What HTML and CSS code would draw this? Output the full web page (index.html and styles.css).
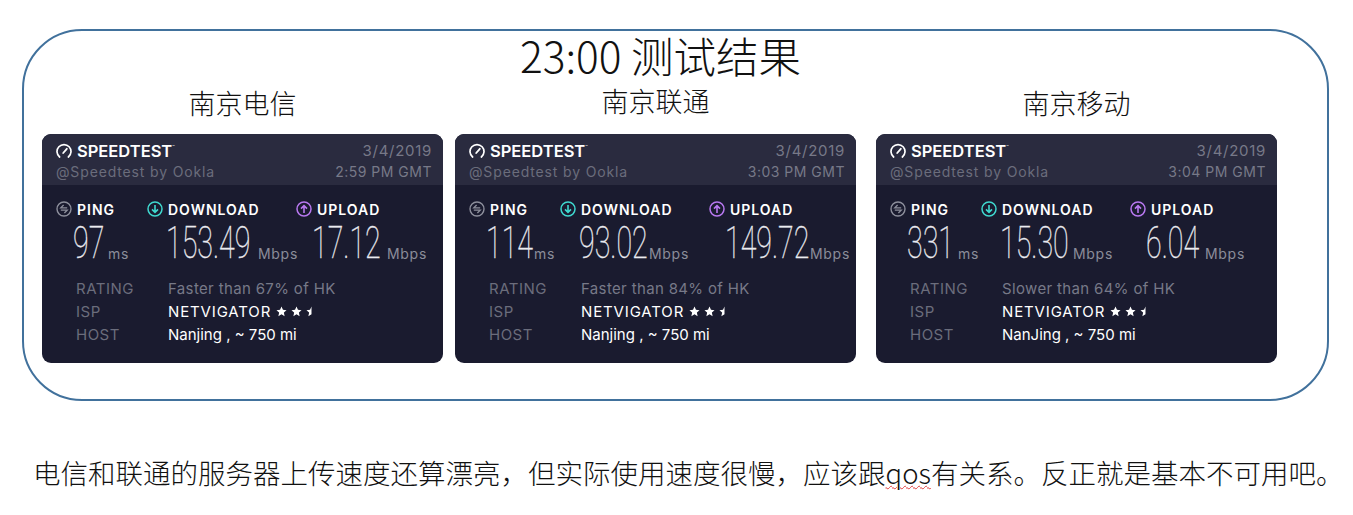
FILE: index.html
```html
<!DOCTYPE html>
<html lang="zh-CN">
<head>
    <meta charset="UTF-8">
    <meta name="viewport" content="width=device-width, initial-scale=1.0">
    <title>23:00 测试结果</title>
    <link rel="stylesheet" href="styles.css">
</head>
<body>
    <svg class="icon-defs" width="0" height="0">
        <symbol id="gauge" viewBox="0 0 16 16">
            <path d="M3.6 14A7 7 0 1 1 12.4 14" fill="none" stroke="currentColor" stroke-width="1.7" stroke-linecap="round"/>
            <path d="M7.2 10L10.8 5.8" fill="none" stroke="currentColor" stroke-width="1.8" stroke-linecap="round"/>
        </symbol>
        <symbol id="ping" viewBox="0 0 16 16">
            <circle cx="8" cy="8" r="7" fill="none" stroke="currentColor" stroke-width="1.4"/>
            <path d="M11.2 6.8H4.8L7.6 4M4.8 9.2H11.2L8.4 12" fill="none" stroke="currentColor" stroke-width="1.3"/>
        </symbol>
        <symbol id="down" viewBox="0 0 16 16">
            <circle cx="8" cy="8" r="7" fill="none" stroke="currentColor" stroke-width="1.5"/>
            <path d="M8 4v7.4M5 8.4l3 3 3-3" fill="none" stroke="currentColor" stroke-width="1.6"/>
        </symbol>
        <symbol id="up" viewBox="0 0 16 16">
            <circle cx="8" cy="8" r="7" fill="none" stroke="currentColor" stroke-width="1.5"/>
            <path d="M8 12V4.6M5 7.6l3-3 3 3" fill="none" stroke="currentColor" stroke-width="1.6"/>
        </symbol>
        <symbol id="star" viewBox="0 0 12 12">
            <path d="M6 .6l1.6 3.6 3.9.4-2.9 2.6.8 3.9L6 9.1l-3.4 2 .8-3.9L.5 4.6l3.9-.4z" fill="currentColor"/>
        </symbol>
        <symbol id="star-half" viewBox="0 0 12 12">
            <path d="M6 .6V9.1l-3.4 2 .8-3.9L.5 4.6l3.9-.4z" fill="currentColor"/>
        </symbol>
    </svg>

    <main class="frame">
        <h1 class="title">23:00 测试结果</h1>
        <div class="columns">
            <section class="column">
                <h2 class="label">南京电信</h2>
                <div class="card">
                    <header class="card-head">
                        <div class="head-line">
                            <span class="brand"><svg class="icon"><use href="#gauge"/></svg>SPEEDTEST<sup class="tm">™</sup></span>
                            <span class="date">3/4/2019</span>
                        </div>
                        <div class="head-line">
                            <span class="by">@Speedtest by Ookla</span>
                            <span class="stamp">2:59 PM GMT</span>
                        </div>
                    </header>
                    <div class="stats">
                        <div class="stat stat-ping">
                            <div class="stat-name"><svg class="icon c-ping"><use href="#ping"/></svg>PING</div>
                            <div class="stat-value"><span class="num w35">97</span><span class="unit">ms</span></div>
                        </div>
                        <div class="stat stat-down">
                            <div class="stat-name"><svg class="icon c-down"><use href="#down"/></svg>DOWNLOAD</div>
                            <div class="stat-value"><span class="num w92">153.49</span><span class="unit">Mbps</span></div>
                        </div>
                        <div class="stat stat-up">
                            <div class="stat-name"><svg class="icon c-up"><use href="#up"/></svg>UPLOAD</div>
                            <div class="stat-value"><span class="num w75">17.12</span><span class="unit">Mbps</span></div>
                        </div>
                    </div>
                    <dl class="details">
                        <dt>RATING</dt><dd class="muted">Faster than 67% of HK</dd>
                        <dt>ISP</dt><dd><span class="isp">NETVIGATOR</span><span class="stars"><svg class="star"><use href="#star"/></svg><svg class="star"><use href="#star"/></svg><svg class="star"><use href="#star-half"/></svg></span></dd>
                        <dt>HOST</dt><dd>Nanjing , ~ 750 mi</dd>
                    </dl>
                </div>
            </section>

            <section class="column">
                <h2 class="label label-high">南京联通</h2>
                <div class="card">
                    <header class="card-head">
                        <div class="head-line">
                            <span class="brand"><svg class="icon"><use href="#gauge"/></svg>SPEEDTEST<sup class="tm">™</sup></span>
                            <span class="date">3/4/2019</span>
                        </div>
                        <div class="head-line">
                            <span class="by">@Speedtest by Ookla</span>
                            <span class="stamp">3:03 PM GMT</span>
                        </div>
                    </header>
                    <div class="stats">
                        <div class="stat stat-ping">
                            <div class="stat-name"><svg class="icon c-ping"><use href="#ping"/></svg>PING</div>
                            <div class="stat-value"><span class="num w48">114</span><span class="unit">ms</span></div>
                        </div>
                        <div class="stat stat-down">
                            <div class="stat-name"><svg class="icon c-down"><use href="#down"/></svg>DOWNLOAD</div>
                            <div class="stat-value"><span class="num w70">93.02</span><span class="unit">Mbps</span></div>
                        </div>
                        <div class="stat stat-up">
                            <div class="stat-name"><svg class="icon c-up"><use href="#up"/></svg>UPLOAD</div>
                            <div class="stat-value"><span class="num w85">149.72</span><span class="unit">Mbps</span></div>
                        </div>
                    </div>
                    <dl class="details">
                        <dt>RATING</dt><dd class="muted">Faster than 84% of HK</dd>
                        <dt>ISP</dt><dd><span class="isp">NETVIGATOR</span><span class="stars"><svg class="star"><use href="#star"/></svg><svg class="star"><use href="#star"/></svg><svg class="star"><use href="#star-half"/></svg></span></dd>
                        <dt>HOST</dt><dd>Nanjing , ~ 750 mi</dd>
                    </dl>
                </div>
            </section>

            <section class="column column-last">
                <h2 class="label">南京移动</h2>
                <div class="card">
                    <header class="card-head">
                        <div class="head-line">
                            <span class="brand"><svg class="icon"><use href="#gauge"/></svg>SPEEDTEST<sup class="tm">™</sup></span>
                            <span class="date">3/4/2019</span>
                        </div>
                        <div class="head-line">
                            <span class="by">@Speedtest by Ookla</span>
                            <span class="stamp">3:04 PM GMT</span>
                        </div>
                    </header>
                    <div class="stats">
                        <div class="stat stat-ping">
                            <div class="stat-name"><svg class="icon c-ping"><use href="#ping"/></svg>PING</div>
                            <div class="stat-value"><span class="num w51">331</span><span class="unit">ms</span></div>
                        </div>
                        <div class="stat stat-down">
                            <div class="stat-name"><svg class="icon c-down"><use href="#down"/></svg>DOWNLOAD</div>
                            <div class="stat-value"><span class="num w73">15.30</span><span class="unit">Mbps</span></div>
                        </div>
                        <div class="stat stat-up">
                            <div class="stat-name"><svg class="icon c-up"><use href="#up"/></svg>UPLOAD</div>
                            <div class="stat-value"><span class="num w59">6.04</span><span class="unit">Mbps</span></div>
                        </div>
                    </div>
                    <dl class="details">
                        <dt>RATING</dt><dd class="muted">Slower than 64% of HK</dd>
                        <dt>ISP</dt><dd><span class="isp">NETVIGATOR</span><span class="stars"><svg class="star"><use href="#star"/></svg><svg class="star"><use href="#star"/></svg><svg class="star"><use href="#star-half"/></svg></span></dd>
                        <dt>HOST</dt><dd>NanJing , ~ 750 mi</dd>
                    </dl>
                </div>
            </section>
        </div>
    </main>

    <p class="note">电信和联通的服务器上传速度还算漂亮，但实际使用速度很慢，应该跟<span class="typo">qos</span>有关系。反正就是基本不可用吧。</p>
</body>
</html>
```

FILE: styles.css
```css
body {
    margin: 0;
    background-color: #fff;
    color: #111;
    font-family: "Noto Sans CJK SC", sans-serif;
}
.icon-defs {
    display: block;
}
.frame {
    box-sizing: border-box;
    width: 1307px;
    height: 372px;
    margin: 29px 0 0 22px;
    padding-left: 18px;
    border: 2px solid #41719c;
    border-radius: 60px;
}
.title {
    margin: 0;
    padding-right: 48px;
    font-size: 42.5px;
    font-weight: 300;
    line-height: 48px;
    text-align: center;
}
.columns {
    display: flex;
    gap: 12px;
    margin-top: 6px;
}
.column-last {
    margin-left: 8px;
}
.label {
    margin: 0 0 13px;
    font-size: 27px;
    font-weight: 300;
    line-height: 36px;
    text-align: center;
}
.label-high {
    margin: -2px 0 15px;
}
.card {
    width: 401px;
    height: 229px;
    overflow: hidden;
    border-radius: 9px;
    background-color: #1a1b2f;
    color: #fff;
    font-family: "Inter", sans-serif;
}
.card-head {
    box-sizing: border-box;
    height: 51px;
    padding: 6px 11px 0 14px;
    background-color: #2a2b3f;
}
.head-line {
    display: flex;
    justify-content: space-between;
    align-items: center;
    height: 21px;
}
.brand {
    display: flex;
    align-items: center;
    font-size: 16.5px;
    font-weight: 600;
}
.tm {
    font-size: 4px;
    font-weight: 400;
    align-self: flex-start;
    margin: 3px 0 0 0;
}
.by {
    color: #6b6d7c;
    font-size: 14px;
    letter-spacing: 0.85px;
}
.date {
    color: #777988;
    font-size: 15px;
    letter-spacing: 0.7px;
}
.stamp {
    color: #777988;
    font-size: 14px;
    letter-spacing: 0.5px;
}
.icon {
    flex: none;
    width: 16px;
    height: 16px;
    margin-right: 5px;
}
.c-ping {
    color: #8d8f9c;
}
.c-down {
    color: #3fd8cf;
}
.c-up {
    color: #b878f0;
}
.stats {
    display: grid;
    grid-template-columns: 91px 149px 1fr;
    padding: 15px 0 0 14px;
}
.stat-name {
    display: flex;
    align-items: center;
    height: 18px;
    font-size: 14px;
    font-weight: 600;
    letter-spacing: 1px;
}
.stat-value {
    display: flex;
    align-items: baseline;
    height: 42px;
    margin-top: 4px;
}
.stat-ping .stat-value {
    padding-left: 17px;
}
.stat-down .stat-value {
    padding-left: 19px;
}
.stat-up .stat-value {
    padding-left: 16px;
}
/* digits are squeezed by hand, the box keeps the width after scaling */
.num {
    display: inline-block;
    color: #f0f0f4;
    font-family: "Roboto", sans-serif;
    font-size: 44px;
    font-weight: 100;
    line-height: 42px;
    white-space: nowrap;
    -webkit-text-stroke: 0.4px #e4e4ea;
    transform: scaleX(0.65);
    transform-origin: left;
}
.w35 { width: 35px; }
.w48 { width: 48px; }
.w51 { width: 51px; }
.w59 { width: 59px; }
.w70 { width: 70px; }
.w73 { width: 73px; }
.w75 { width: 75px; }
.w85 { width: 85px; }
.w92 { width: 92px; }
.unit {
    color: #8b8d9a;
    font-size: 14px;
    letter-spacing: 0.7px;
    transform: translateY(1px);
}
.details {
    display: grid;
    grid-template-columns: 92px 1fr;
    grid-auto-rows: 23px;
    align-items: center;
    margin: 13px 0 0;
    padding-left: 34px;
    font-size: 15px;
}
.details dt {
    color: #6b6d7c;
    letter-spacing: 0.5px;
}
.details dd {
    display: flex;
    align-items: center;
    margin: 0;
    white-space: pre;
}
.details .muted {
    color: #777988;
    letter-spacing: 0.35px;
}
.isp {
    letter-spacing: 0.85px;
}
.stars {
    display: flex;
    gap: 4px;
    margin-left: 5px;
}
.star {
    width: 11px;
    height: 11px;
}
.note {
    margin: 53px 0 0 33px;
    font-size: 27.5px;
    font-weight: 300;
    line-height: 36px;
    white-space: nowrap;
}
.typo {
    text-decoration: underline wavy #e04040 1px;
}
```
